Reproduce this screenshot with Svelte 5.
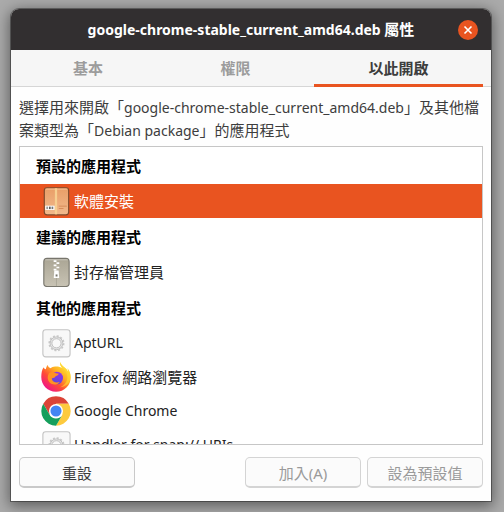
<script>
  const fileName = "google-chrome-stable_current_amd64.deb";
  const tabs = ["基本", "權限", "以此開啟"];
  let activeTab = $state(2);
  let selected = $state("軟體安裝");

  const groups = [
    { title: "預設的應用程式", apps: [{ name: "軟體安裝", icon: "package" }] },
    { title: "建議的應用程式", apps: [{ name: "封存檔管理員", icon: "archive" }] },
    {
      title: "其他的應用程式",
      apps: [
        { name: "AptURL", icon: "gear" },
        { name: "Firefox 網路瀏覽器", icon: "firefox" },
        { name: "Google Chrome", icon: "chrome" },
        { name: "Handler for snap:// URIs", icon: "gear" },
      ],
    },
  ];

  // split a label into latin and chinese runs
  function runs(text) {
    return text.match(/[\x20-\x7e]+|[^\x20-\x7e]+/g);
  }
</script>

{#snippet label(text)}
  {#each runs(text) as run}<span class:latin={/^[\x20-\x7e]/.test(run)}>{run}</span>{/each}
{/snippet}

{#snippet appIcon(icon)}
  <svg class="icon" viewBox="0 0 32 32" aria-hidden="true">
    {#if icon === "package"}
      <defs>
        <linearGradient id="box" x1="0" y1="0" x2="0" y2="1">
          <stop offset="0" stop-color="#e99e67" />
          <stop offset="1" stop-color="#f1b98c" />
        </linearGradient>
      </defs>
      <rect x="3.5" y="1.8" width="26" height="29" rx="3" fill="url(#box)" stroke="#7c4a2c" stroke-width="1.2" />
      <path d="M4.8 3.3h23.4" stroke="#f6c49b" />
      <rect x="14.8" y="2.4" width="2.4" height="27.8" fill="#f7cf91" />
      <rect x="4.5" y="21" width="10" height="4.5" fill="#fff" />
      <path d="M6.5 22v2.6M9 22v2.6M10.5 22v2.6M12.5 22v2.6" stroke="#444" stroke-width="1" />
      <path d="M19 21.5h8.5M19 24h5" stroke="#d58a58" />
    {:else if icon === "archive"}
      <defs>
        <linearGradient id="zip" x1="0" y1="0" x2="0" y2="1">
          <stop offset="0" stop-color="#aaa594" />
          <stop offset="1" stop-color="#c8c3b4" />
        </linearGradient>
      </defs>
      <rect x="3" y="1.5" width="27" height="30" rx="3.5" fill="url(#zip)" stroke="#77756c" stroke-width="1.2" />
      <path d="M4.5 3h24" stroke="#c9c6bc" />
      <path d="M16.5 22v9" stroke="#aaa696" />
      <path d="M13.5 4.3h3M16.5 6.6h3M13.5 8.9h3M16.5 11.2h3M13.5 13.5h3" stroke="#fff" stroke-width="1.8" />
      <path d="M14.2 14.5h4.600l.6 8h-5.800z" fill="#fff" />
      <rect x="15.600" y="18.600" width="2" height="2.200" fill="#77756c" />
    {:else if icon === "gear"}
      <rect x="2" y="1.8" width="29" height="29" rx="3" fill="#f8f8f8" stroke="#c4c4c4" stroke-width="1.2" />
      <circle cx="16.5" cy="16.3" r="7.800" fill="none" stroke="#c8c8c8" stroke-width="1.6" stroke-dasharray="2.2 1.88" />
      <circle cx="16.5" cy="16.3" r="6.800" fill="#e6e6e6" stroke="#bdbdbd" stroke-width="1" />
      <circle cx="16.5" cy="16.3" r="4.900" fill="#f9f9f9" stroke="#bdbdbd" stroke-width="1" />
    {:else if icon === "firefox"}
      <defs>
        <linearGradient id="fox" x1=".85" y1=".1" x2=".15" y2=".9">
          <stop offset="0" stop-color="#ffe83b" />
          <stop offset=".35" stop-color="#ffae20" />
          <stop offset=".65" stop-color="#ff4c35" />
          <stop offset="1" stop-color="#f0128b" />
        </linearGradient>
        <linearGradient id="globe" x1=".7" y1="0" x2=".3" y2="1">
          <stop offset="0" stop-color="#9a32e8" />
          <stop offset="1" stop-color="#554bdc" />
        </linearGradient>
      </defs>
      <path d="M20.4 0c-.7 3 .9 5 2.6 6.6-2.3-1.5-5.5-2-8-1.7-2.1.2-3.6.9-4.6 1.7C9 6.4 7.5 5 7.2 3.2 5.8 4.6 5.4 6.5 5.2 7.8 3.9 7.3 3 6.7 2.7 5.5.8 8.5.4 12 .3 16c0 8.800 6.800 15.700 15.700 15.700S31.700 25 31.700 16.500c0-3.700-1.100-7.400-3.500-9.800.6 1.500.8 2.800.8 4C27.200 5.600 21.800 4.800 20.400 0z" fill="url(#fox)" />
      <path d="M20.400 0c-.7 3 .9 5 2.600 6.600 3.500 2.500 5.500 6 5 10.900-.5 4.500-4 8-8 9.500 7-.5 11.500-5 11.500-11.500-.3-3.500-1.300-6.500-3.300-8.800.6 1.500.8 2.800.8 4C27.200 5.600 21.800 4.800 20.400 0z" fill="#ffdc35" opacity=".6" />
      <circle cx="16.8" cy="17" r="6.7" fill="url(#globe)" />
      <path d="M8.5 12c2.300-1.800 5-1.800 6.500-.5 1.200.9 2.700.8 4 .9-.3 1.800-3 1.900-3.500 2.900-.5 1.700-2.500 1.600-4 2.200.3 3.500 4.500 5.300 8.500 3.800-2.200 3.400-8 3.700-11 .4-2.300-2.700-2.500-6.700-.5-9.700z" fill="#ff9224" />
    {:else}
      <path d="M2.4 8.2A15.700 15.700 0 0 1 29.600 8.200H16L9.200 20z" fill="#db4437" />
      <path d="M16 8.200h13.600A15.700 15.700 0 0 1 16 31.700l6.800-11.800z" fill="#fdca3e" />
      <path d="M2.400 8.200 9.200 20a7.800 7.800 0 0 0 13.600 0L16 31.700A15.700 15.700 0 0 1 2.400 8.200z" fill="#159f5c" />
      <circle cx="16" cy="16" r="7.500" fill="#fff" />
      <circle cx="16" cy="16" r="5.900" fill="#4285f4" />
    {/if}
  </svg>
{/snippet}

<main>
  <section class="window">
    <header>
      <h1>{@render label(`${fileName} 屬性`)}</h1>
      <button class="close" aria-label="關閉">
        <svg viewBox="0 0 20 20" aria-hidden="true">
          <path d="M6.5 6.5l7 7M13.5 6.5l-7 7" stroke="#fff" stroke-width="1.6" />
        </svg>
      </button>
    </header>

    <nav>
      {#each tabs as tab, i}
        <button class="tab" class:active={activeTab === i} onclick={() => (activeTab = i)}>{tab}</button>
      {/each}
    </nav>

    <div class="content">
      <p>{@render label(`選擇用來開啟「${fileName}」及其他檔案類型為「Debian package」的應用程式`)}</p>

      <div class="list">
        {#each groups as group}
          <h2>{group.title}</h2>
          <ul>
            {#each group.apps as app}
              <li>
                <button class="app" class:selected={selected === app.name} onclick={() => (selected = app.name)}>
                  {@render appIcon(app.icon)}
                  <span class="name">{@render label(app.name)}</span>
                </button>
              </li>
            {/each}
          </ul>
        {/each}
      </div>

      <footer>
        <button class="btn reset">重設</button>
        <button class="btn" disabled>加入(A)</button>
        <button class="btn" disabled>設為預設值</button>
      </footer>
    </div>
  </section>
</main>

<style>
  :global(body) {
    background: #aaa;
  }

  main {
    box-sizing: border-box;
    height: 100vh;
    min-height: 360px;
    padding: 9px 13px 11px 11px;
    display: flex;
    overflow: hidden;
    font-family: "Noto Sans", "Noto Sans CJK TC", sans-serif;
    font-size: 15px;
    color: #3d3d3d;
  }

  button {
    font: inherit;
    color: inherit;
    padding: 0;
    border: none;
    background: none;
  }

  .latin {
    font-size: 14px;
    white-space: pre-wrap;
  }

  .window {
    flex: 1;
    min-width: 0;
    display: flex;
    flex-direction: column;
    background: #fefefe;
    border-radius: 8px 8px 0 0;
    box-shadow:
      0 0 0 1px rgba(0, 0, 0, 0.35),
      0 3px 14px 2px rgba(0, 0, 0, 0.45);
  }

  header {
    display: flex;
    align-items: center;
    height: 41px;
    padding: 0 13px 0 33px;
    border-radius: 8px 8px 0 0;
    background: #322f30;
    color: #fff;
  }

  h1 {
    flex: 1;
    margin: 0;
    font-size: 15px;
    line-height: 22px;
    text-align: center;
    white-space: nowrap;
  }

  .close {
    width: 20px;
    height: 20px;
    border-radius: 50%;
    background: #e95420;
  }

  .close svg {
    display: block;
  }

  nav {
    display: grid;
    grid-template-columns: 138fr 157fr 169fr;
    height: 37px;
    padding: 0 8px;
    background: #f6f6f6;
    box-shadow: inset 0 -1px #d6d6d6;
  }

  .tab {
    border-bottom: 3px solid transparent;
    font-weight: bold;
    color: #9c9c9c;
  }

  .tab.active {
    border-color: #e95420;
    color: #3d3d3d;
  }

  .content {
    flex: 1;
    min-height: 0;
    display: flex;
    flex-direction: column;
    padding: 9px 8px 13px;
  }

  p {
    margin: 0 0 4px;
    line-height: 23px;
  }

  .list {
    flex: 1;
    min-height: 0;
    overflow: hidden;
    border: 1px solid #c6c6c6;
    background: #fff;
    color: #000;
  }

  h2 {
    margin: 0;
    padding: 2px 0 0 16px;
    font-size: 15px;
    line-height: 35px;
  }

  ul {
    margin: 0;
    padding: 0;
    list-style: none;
  }

  .app {
    display: flex;
    align-items: center;
    gap: 3px;
    width: 100%;
    height: 34px;
    padding-left: 21px;
    color: #222;
  }

  .app.selected {
    background: #e95420;
    color: #fff;
  }

  .icon {
    width: 30px;
    height: 30px;
  }

  .name {
    padding-bottom: 2px;
  }

  footer {
    display: flex;
    gap: 6px;
    margin-top: 12px;
  }

  .btn {
    width: 25%;
    height: 31px;
    border: 1px solid #c9c9c9;
    border-bottom-width: 2px;
    border-radius: 5px;
    background: #fbfbfb;
  }

  .btn:disabled {
    color: #9a9a9a;
    border-color: #d4d4d4;
  }

  .reset {
    margin-right: auto;
  }
</style>
